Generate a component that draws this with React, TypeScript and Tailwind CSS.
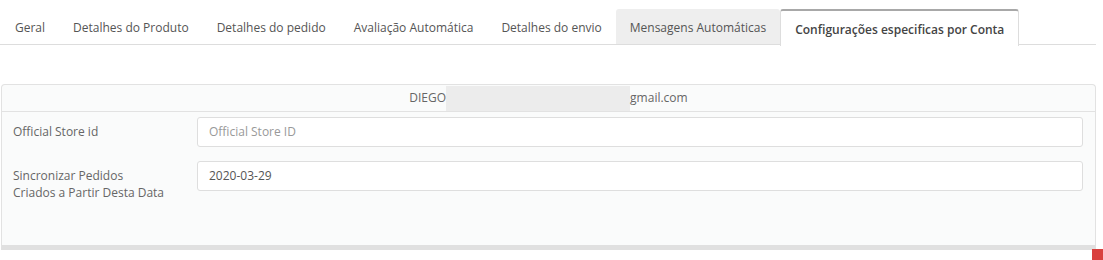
import React from "react";

const tabs = [
  "Geral",
  "Detalhes do Produto",
  "Detalhes do pedido",
  "Avaliação Automática",
  "Detalhes do envio",
  "Mensagens Automáticas",
  "Configurações especificas por Conta",
];

export default function App() {
  return (
    <div className="relative w-[1103px] h-[260px] bg-white overflow-hidden font-['Open_Sans',_'Liberation_Sans',_sans-serif] text-[12px] text-[#555]">
      {/* Tabs */}
      <div className="pt-[9px] w-[1096px]">
        <ul className="flex h-[36px] border-b border-[#dddddd] pl-[1px] whitespace-nowrap">
          {tabs.map((t, i) => {
            const active = i === tabs.length - 1;
            const hover = i === tabs.length - 2;
            return (
              <li
                key={t}
                className={
                  active
                    ? "shrink-0 -mb-[1px] h-[37px] pt-[2px] px-[14px] flex items-center bg-white border-x border-[#dddddd] border-t-2 border-t-[#a8a8a8] rounded-t-[3px] font-semibold text-[#444]"
                    : hover
                    ? "shrink-0 h-[35px] pt-[2px] px-[14px] flex items-center bg-[#eeeeee] rounded-t-[3px]"
                    : "shrink-0 h-[35px] pt-[2px] px-[14px] flex items-center"
                }
              >
                {t}
              </li>
            );
          })}
        </ul>
      </div>

      {/* Panel */}
      <div className="mt-[39px] ml-[1px] w-[1095px] h-[166px] flex flex-col bg-[#fafbfb] border border-[#e2e2e2] rounded-t-[4px] border-b-[5px] border-b-[#e0e0e0]">
        <div className="h-[27px] flex items-center justify-center border-b border-[#e2e2e2] text-[#666]">
          <span>DIEGO</span>
          <span className="inline-block w-[184px] h-[25px] bg-[#ececec]" />
          <span>gmail.com</span>
        </div>
        <div className="flex flex-col gap-[14px] pt-[5px] pl-[11px] pr-[12px]">
          <div className="flex items-center">
            <label className="w-[184px] text-[#666]">Official Store id</label>
            <div className="flex-1 h-[30px] bg-white border border-[#dedede] rounded-[3px] flex items-center px-[11px] text-[#999]">
              Official Store ID
            </div>
          </div>
          <div className="flex items-start">
            <label className="w-[184px] pt-[6px] leading-[17px] text-[#666]">
              Sincronizar Pedidos
              <br />
              Criados a Partir Desta Data
            </label>
            <div className="flex-1 h-[30px] bg-white border border-[#dedede] rounded-[3px] flex items-center px-[11px] text-[#555]">
              2020-03-29
            </div>
          </div>
        </div>
      </div>

      <div className="absolute left-[1092px] top-[249px] w-[11px] h-[11px] bg-[#d9413f]" />
    </div>
  );
}
